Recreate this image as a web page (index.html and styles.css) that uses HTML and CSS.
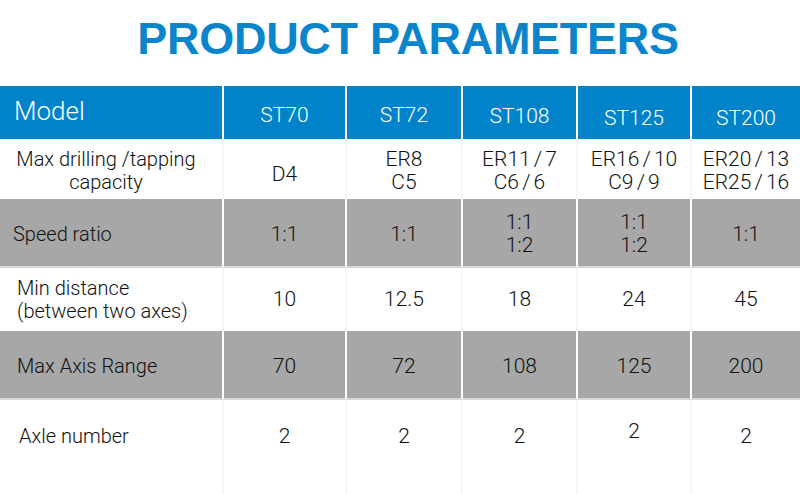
FILE: index.html
```html
<!DOCTYPE html>
<html lang="en">
<head>
<meta charset="utf-8">
<title>Product Parameters</title>
<link rel="stylesheet" href="styles.css">
</head>
<body>
<h1 class="title">PRODUCT PARAMETERS</h1>
<div class="table">
  <div class="row head">
    <div class="cell label model">Model</div>
    <div class="cell">ST70</div>
    <div class="cell">ST72</div>
    <div class="cell mid">ST108</div>
    <div class="cell lo">ST125</div>
    <div class="cell lo">ST200</div>
  </div>
  <div class="row white r1">
    <div class="cell label center">Max drilling /tapping<br>capacity</div>
    <div class="cell d4">D4</div>
    <div class="cell">ER8<br>C5</div>
    <div class="cell">ER11 / 7<br>C6 / 6</div>
    <div class="cell">ER16 / 10<br>C9 / 9</div>
    <div class="cell">ER20 / 13<br>ER25 / 16</div>
  </div>
  <div class="row gray r2">
    <div class="cell label tight">Speed ratio</div>
    <div class="cell">1:1</div>
    <div class="cell">1:1</div>
    <div class="cell">1:1<br>1:2</div>
    <div class="cell">1:1<br>1:2</div>
    <div class="cell">1:1</div>
  </div>
  <div class="row white r3">
    <div class="cell label">Min distance<br>(between two axes)</div>
    <div class="cell">10</div>
    <div class="cell">12.5</div>
    <div class="cell">18</div>
    <div class="cell">24</div>
    <div class="cell">45</div>
  </div>
  <div class="row gray r4">
    <div class="cell label">Max Axis Range</div>
    <div class="cell">70</div>
    <div class="cell">72</div>
    <div class="cell">108</div>
    <div class="cell">125</div>
    <div class="cell">200</div>
  </div>
  <div class="row white r5">
    <div class="cell label wide">Axle number</div>
    <div class="cell">2</div>
    <div class="cell">2</div>
    <div class="cell">2</div>
    <div class="cell up">2</div>
    <div class="cell">2</div>
  </div>
</div>
</body>
</html>
```
FILE: styles.css
```css
html, body {
  margin: 0;
  padding: 0;
  background: #ffffff;
}

body {
  width: 800px;
  height: 494px;
  overflow: hidden;
  font-family: Roboto, "Liberation Sans", sans-serif;
  color: #111111;
}

.title {
  margin: 0;
  height: 86px;
  box-sizing: border-box;
  padding: 13px 0 0 16px;
  line-height: 52px;
  font-family: "Liberation Sans", Arial, sans-serif;
  font-weight: 700;
  font-size: 45px;
  letter-spacing: -0.3px;
  text-align: center;
  color: #0a84ca;
}

.table {
  display: flex;
  flex-direction: column;
}

.row {
  display: grid;
  grid-template-columns: 224px 123px 116px 115px 114px 108px;
}

.cell {
  box-sizing: border-box;
  display: flex;
  align-items: center;
  justify-content: center;
  text-align: center;
  font-size: 21px;
  font-weight: 300;
  line-height: 23px;
  border-right: 2px solid #ffffff;
  word-spacing: -2px;
}

.cell:last-child {
  border-right: none;
}

.label {
  justify-content: flex-start;
  text-align: left;
  padding-left: 17px;
  font-size: 20px;
  word-spacing: 0;
}

.label.center {
  justify-content: center;
  text-align: center;
  padding-left: 0;
  padding-right: 10px;
}

.label.tight {
  padding-left: 13px;
}

.label.wide {
  padding-left: 19px;
}

/* header */
.head {
  height: 53px;
  background: #0083c9;
}

.head .cell {
  color: #ffffff;
  font-size: 21px;
  padding-top: 5px;
}

.head .model {
  font-size: 26px;
  font-weight: 300;
  padding-top: 0;
  padding-bottom: 3px;
  padding-left: 14px;
}

.head .mid {
  padding-top: 8px;
}

.head .lo {
  padding-top: 11px;
}

/* body rows */
.white .cell {
  background: #ffffff;
  border-right: 2px solid #f6f6f6;
}

.white .cell:last-child {
  border-right: none;
}

.gray .cell {
  background: #a6a7a6;
  border-bottom: 2px solid #d6d7d6;
}

.r1 {
  height: 60px;
}

.r1 .cell {
  padding-top: 4px;
}

.r1 .d4 {
  padding-top: 10px;
}

.r2 {
  height: 69px;
}

.r2 .cell {
  padding-top: 3px;
}

.r3 {
  height: 63px;
}

.r4 {
  height: 69px;
}

.r4 .cell {
  padding-top: 4px;
}

.r5 {
  height: 94px;
}

.r5 .cell {
  padding-bottom: 21px;
}

.r5 .up {
  padding-bottom: 31px;
}
```
